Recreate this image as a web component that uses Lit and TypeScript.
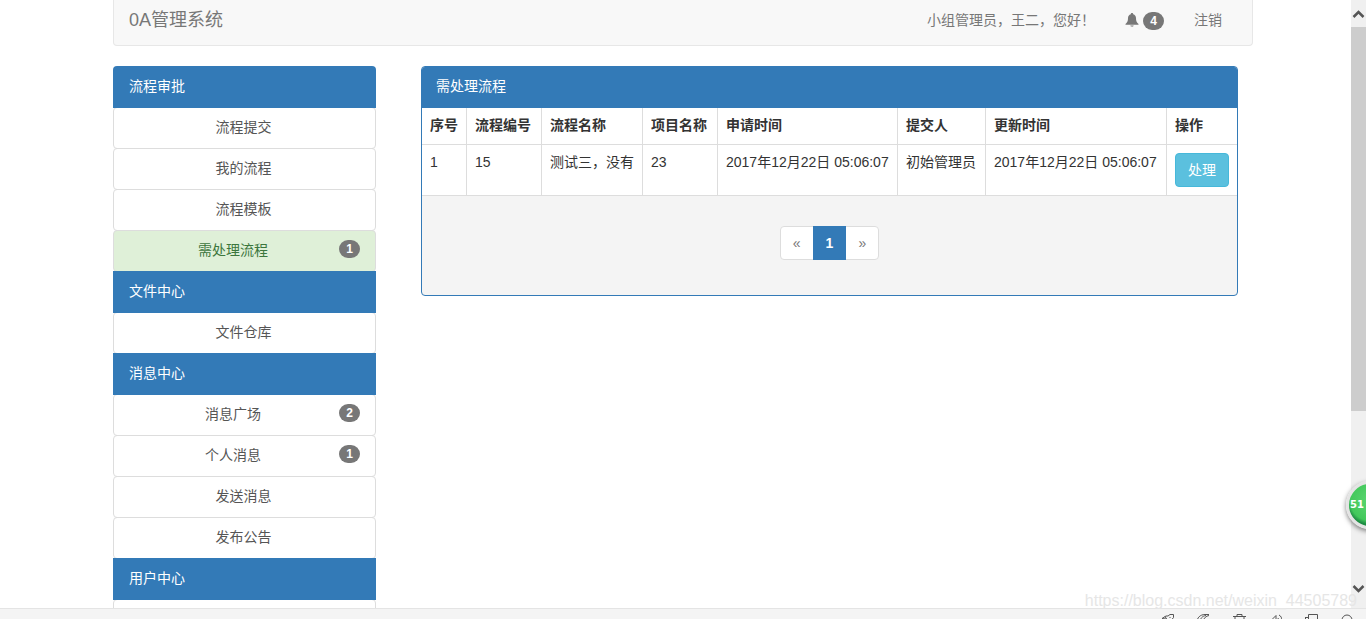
import { LitElement, html, css, svg, nothing } from "lit";
import { customElement } from "lit/decorators.js";
import { classMap } from "lit/directives/class-map.js";

interface Item {
  label: string;
  count?: number;
  current?: boolean;
}
interface Section {
  title: string;
  items: Item[];
}

const sections: Section[] = [
  {
    title: "流程审批",
    items: [
      { label: "流程提交" },
      { label: "我的流程" },
      { label: "流程模板" },
      { label: "需处理流程", count: 1, current: true },
    ],
  },
  { title: "文件中心", items: [{ label: "文件仓库" }] },
  {
    title: "消息中心",
    items: [
      { label: "消息广场", count: 2 },
      { label: "个人消息", count: 1 },
      { label: "发送消息" },
      { label: "发布公告" },
    ],
  },
  { title: "用户中心", items: [{ label: "" }] },
];

const columns = [
  { title: "序号", cls: "c-no" },
  { title: "流程编号", cls: "c-id" },
  { title: "流程名称", cls: "c-name" },
  { title: "项目名称", cls: "c-id" },
  { title: "申请时间", cls: "c-start" },
  { title: "提交人", cls: "c-user" },
  { title: "更新时间", cls: "c-time" },
  { title: "操作", cls: "c-act" },
];

const rows = [
  ["1", "15", "测试三，没有", "23", "2017年12月22日 05:06:07", "初始管理员", "2017年12月22日 05:06:07"],
];

const toolIcons = [
  svg`<path d="M1 4.500l4-2.500h2l2-1.500h3.500v3l-2 2.500-3 3M4 2.500l2 3M1 4.500l4 .5M8.500 3.500h1"/>`,
  svg`<path d="M0 8c0-4 3-7.500 8-7.500M3 8c0-3 2-6 6-6.500M6 7c1-3 3-5 6-5.500M8 .5h4"/>`,
  svg`<path d="M0 2.500h13M4 2.500v-2h5v2M2 3v6M11 3v6M5 5v4M8 5v4"/>`,
  svg`<path d="M0 5.500h3l4-4v8M10 1c2 1 3 3 3 6M9 4l1 3"/>`,
  svg`<path d="M3.500 9v-8.500h9v7M0 3.500h3M0.500 3.500v5"/>`,
  svg`<circle cx="6" cy="6" r="5"/>`,
];

@customElement("app-root")
export class AppRoot extends LitElement {
  static styles = css`
    :host {
      display: flex;
      flex-direction: column;
      position: relative;
      height: 100vh;
      overflow: hidden;
      background: #fff;
      color: #333;
      font: 14px/20px "Liberation Sans", "Noto Sans CJK SC", sans-serif;
    }
    *, *::before, *::after { box-sizing: border-box; }
    a { color: inherit; text-decoration: none; }
    .page { flex: 1; min-height: 0; overflow: hidden; }
    .container { max-width: 1140px; margin: 0 auto; }
    .navbar {
      display: flex;
      align-items: center;
      gap: 30px;
      margin-bottom: 20px;
      padding: 10px 30px 15px 15px;
      border: 1px solid #e7e7e7;
      border-top: 0;
      border-radius: 0 0 4px 4px;
      background: #f8f8f8;
      color: #777;
    }
    .brand { margin-right: auto; font-size: 18px; }
    .alerts { display: flex; align-items: center; gap: 4px; }
    .alerts .badge { margin-top: 2px; }
    .badge {
      min-width: 21px;
      padding: 3px 7px;
      border-radius: 10px;
      background: #777;
      color: #fff;
      font-size: 12px;
      font-weight: 700;
      line-height: 12px;
      text-align: center;
    }
    .columns {
      display: grid;
      grid-template-columns: 263px minmax(0, 1fr);
      gap: 45px;
      align-items: start;
      padding-right: 15px;
    }
    .side { display: flex; flex-direction: column; }
    .heading {
      margin: 0;
      padding: 10px 16px 12px;
      background: #337ab7;
      color: #fff;
      font-size: 14px;
      font-weight: 400;
    }
    .side .heading { z-index: 1; margin-bottom: -1px; }
    .side .heading:first-child { border-radius: 4px 4px 0 0; }
    .item {
      display: flex;
      align-items: flex-start;
      margin-bottom: -1px;
      padding: 9px 15px 11px 13px;
      min-height: 42px;
      border: 1px solid #ddd;
      border-radius: 4px;
      color: #555;
    }
    .item .label { flex: 1; text-align: center; }
    .item.current { background: #dff0d8; color: #3c763d; }
    .panel {
      overflow: hidden;
      border: 1px solid #337ab7;
      border-radius: 4px;
      background: #f4f4f4;
    }
    .panel .heading { padding: 9px 14px 12px; }
    table { width: 100%; border-collapse: separate; border-spacing: 0; background: #fff; }
    th, td {
      padding: 7px 8px 9px;
      border-right: 1px solid #ddd;
      border-bottom: 1px solid #ddd;
      text-align: left;
      vertical-align: top;
      white-space: nowrap;
    }
    th:last-child, td:last-child { border-right: 0; }
    td:last-child { padding: 8px; }
    .c-no { width: 45px; }
    .c-id { width: 75px; }
    .c-name { width: 101px; }
    .c-start { width: 180px; }
    .c-time { width: 181px; }
    .c-user { width: 88px; }
    .c-act { width: 70px; }
    .action {
      display: block;
      padding: 6px 12px;
      border: 1px solid #46b8da;
      border-radius: 4px;
      background: #5bc0de;
      color: #fff;
      font: inherit;
    }
    .pages {
      display: flex;
      justify-content: center;
      margin: 0;
      padding: 30px 0 35px;
      list-style: none;
    }
    .pages a {
      display: block;
      padding: 6px 12px;
      border: 1px solid #ddd;
      background: #fff;
      color: #777;
    }
    .pages li + li { margin-left: -1px; }
    .pages li:first-child a { border-radius: 4px 0 0 4px; }
    .pages li:last-child a { border-radius: 0 4px 4px 0; }
    .pages .on { position: relative; border-color: #337ab7; background: #337ab7; color: #fff; font-weight: 700; }
    .scrollbar {
      position: absolute;
      top: 0;
      right: 0;
      bottom: 11px;
      width: 15px;
      display: flex;
      flex-direction: column;
      align-items: center;
      padding: 10px 0 15px;
      gap: 9px;
      background: #f0f0f0;
    }
    .scrollbar svg { display: block; flex: none; }
    .track { flex: 1; width: 100%; }
    .thumb { height: 70%; background: #cdcdcd; }
    .toolbar {
      display: flex;
      justify-content: flex-end;
      gap: 23px;
      height: 11px;
      padding: 5px 12px 0 0;
      overflow: hidden;
      border-top: 1px solid #e4e4e4;
      background: #f4f4f4;
    }
    .toolbar svg { display: block; flex: none; }
    .watermark {
      position: absolute;
      right: 9px;
      bottom: 8px;
      color: #e6e6e6;
      font-size: 16px;
    }
    .ball {
      position: absolute;
      right: -28px;
      bottom: 90px;
      width: 48px;
      height: 48px;
      padding: 0 0 0 1px;
      border: 3px solid #e4e4e4;
      border-radius: 50%;
      background: radial-gradient(circle at 50% 40%, #5cd672, #43c85b 60%, #1d8c43 72%);
      box-shadow: 0 2px 5px rgba(0, 0, 0, 0.5);
      color: #fff;
      font: 700 10px/12px "DejaVu Sans", sans-serif;
      text-align: left;
    }
  `;

  private renderItem(item: Item) {
    return html`<a href="#" class=${classMap({ item: true, current: !!item.current })}>
      <span class="label">${item.label}</span>
      ${item.count ? html`<span class="badge">${item.count}</span>` : nothing}
    </a>`;
  }

  render() {
    return html`
      <div class="page" lang="zh-CN">
        <div class="container">
          <nav class="navbar">
            <a class="brand" href="#">0A管理系统</a>
            <span>小组管理员，王二，您好！</span>
            <a class="alerts" href="#" aria-label="消息">
              <svg width="14" height="14" viewBox="0 0 14 14" fill="currentColor" aria-hidden="true">
                <path d="M7 0c.8 0 1.200.5 1.200 1.200C10 1.800 11 3.300 11 5c0 3 .6 4.500 2.500 6v.8H.5V11C2.400 9.500 3 8 3 5c0-1.700 1-3.200 2.800-3.800C5.800.5 6.200 0 7 0zM5.300 12.500h3.400c-.2.8-.9 1.200-1.700 1.200s-1.500-.4-1.700-1.200z" />
              </svg>
              <span class="badge">4</span>
            </a>
            <a href="#">注销</a>
          </nav>
          <div class="columns">
            <aside class="side">
              ${sections.map((s) => html`<h2 class="heading">${s.title}</h2>${s.items.map((i) => this.renderItem(i))}`)}
            </aside>
            <main class="panel">
              <h2 class="heading">需处理流程</h2>
              <table>
                <thead>
                  <tr>${columns.map((c) => html`<th class=${c.cls} scope="col">${c.title}</th>`)}</tr>
                </thead>
                <tbody>
                  ${rows.map((r) => html`<tr>
                    ${r.map((v) => html`<td>${v}</td>`)}
                    <td><button class="action" type="button">处理</button></td>
                  </tr>`)}
                </tbody>
              </table>
              <ul class="pages">
                <li><a href="#" aria-label="上一页">«</a></li>
                <li><a href="#" class="on" aria-current="page">1</a></li>
                <li><a href="#" aria-label="下一页">»</a></li>
              </ul>
            </main>
          </div>
        </div>
      </div>
      <div class="scrollbar" aria-hidden="true">
        <svg width="13" height="8" viewBox="0 0 13 8" fill="none" stroke="#555" stroke-width="2.500"><path d="M1.500 7l5-5 5 5" /></svg>
        <div class="track"><div class="thumb"></div></div>
        <svg width="13" height="8" viewBox="0 0 13 8" fill="none" stroke="#555" stroke-width="2.500"><path d="M1.500 1l5 5 5-5" /></svg>
      </div>
      <footer class="toolbar">
        ${toolIcons.map((i) => html`<svg width="13" height="9" viewBox="0 0 13 9" fill="none" stroke="#555" aria-hidden="true">${i}</svg>`)}
      </footer>
      <button class="ball" type="button">51</button>
      <span class="watermark">https://blog.csdn.net/weixin_44505789</span>
    `;
  }
}
